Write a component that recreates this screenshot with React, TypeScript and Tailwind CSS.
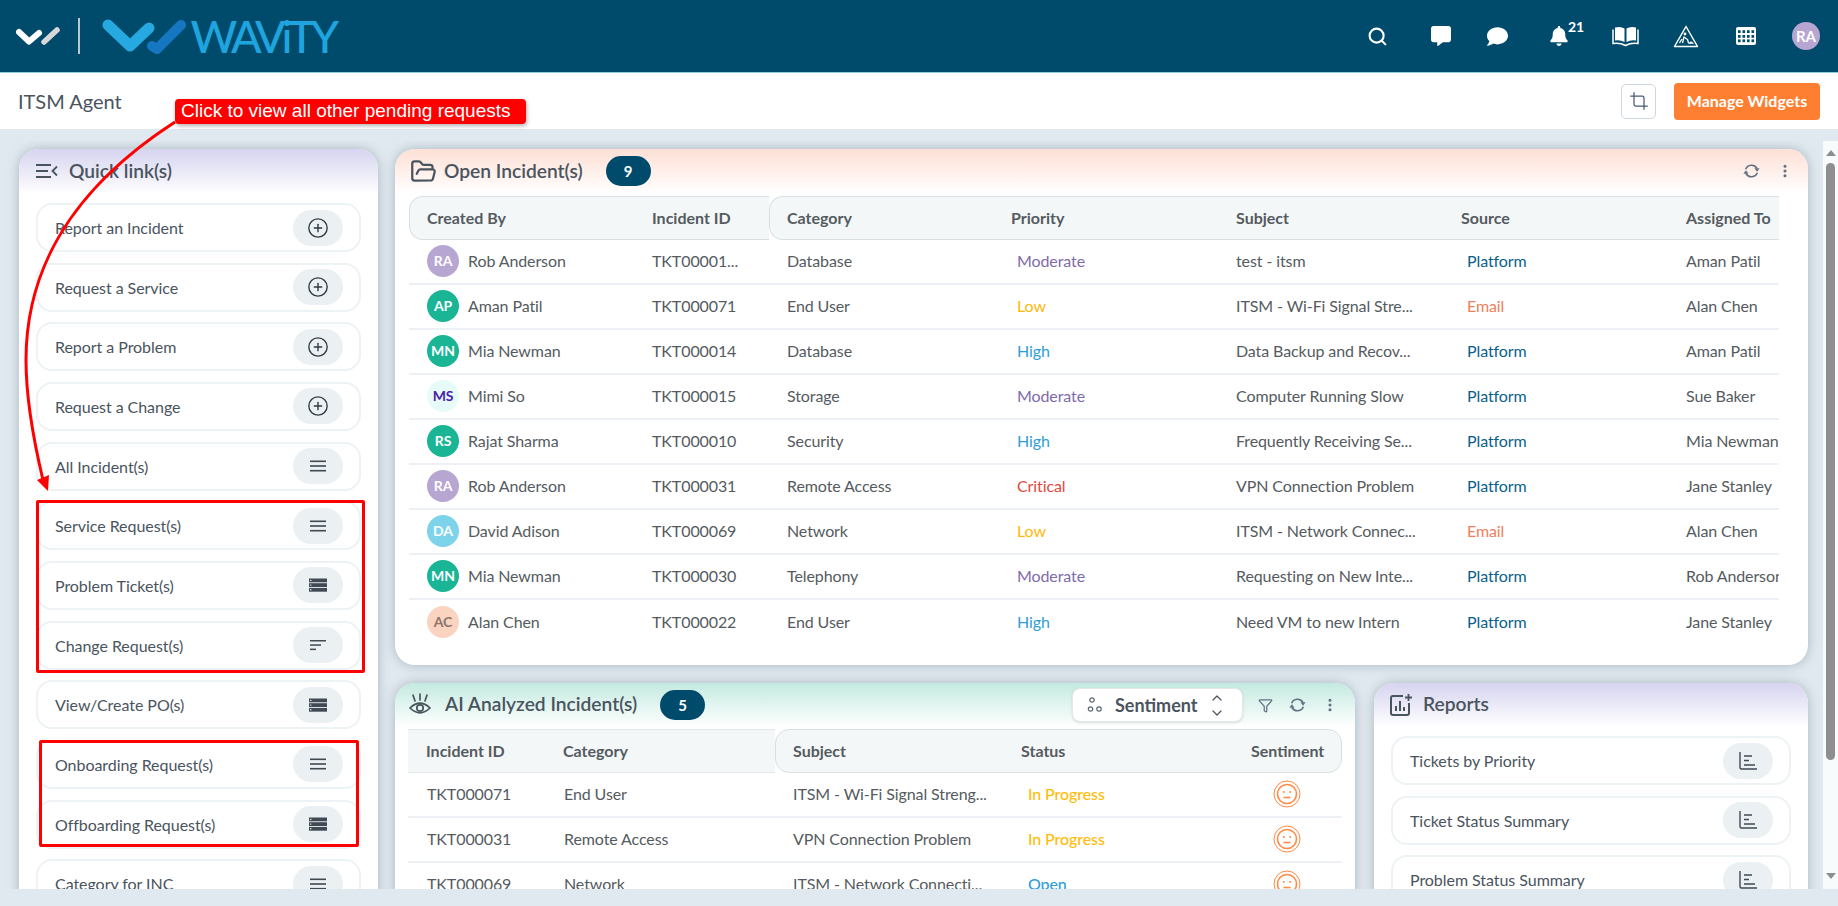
import { Search, CirclePlus, Crop, FolderOpen, EllipsisVertical, Funnel, ChevronUp, ChevronDown } from "lucide-react";
import { FaCommentAlt, FaComment, FaBell } from "react-icons/fa";

const linkItems = [
  { label: "Report an Incident", icon: "plus" },
  { label: "Request a Service", icon: "plus" },
  { label: "Report a Problem", icon: "plus" },
  { label: "Request a Change", icon: "plus" },
  { label: "All Incident(s)", icon: "menu" },
  { label: "Service Request(s)", icon: "menu" },
  { label: "Problem Ticket(s)", icon: "server" },
  { label: "Change Request(s)", icon: "sort" },
  { label: "View/Create PO(s)", icon: "server" },
  { label: "Onboarding Request(s)", icon: "menu" },
  { label: "Offboarding Request(s)", icon: "server" },
  { label: "Category for INC", icon: "menu" },
];

const avatarColors: Record<string, string> = {
  RA: "bg-[#b7a6d2] text-white",
  AP: "bg-[#1ab595] text-white",
  MN: "bg-[#1ab595] text-white",
  MS: "bg-[#e6fbfa] text-[#4a22a8]",
  RS: "bg-[#1ab595] text-white",
  DA: "bg-[#7dd3ea] text-white",
  AC: "bg-[#fad4c0] text-[#8a7468]",
};

const priorityColors: Record<string, string> = {
  Moderate: "text-[#7e6bab]",
  Low: "text-[#ffb80a]",
  High: "text-[#2f9ed8]",
  Critical: "text-[#e0483e]",
};

const incidents = [
  ["RA", "Rob Anderson", "TKT00001...", "Database", "Moderate", "test - itsm", "Platform", "Aman Patil"],
  ["AP", "Aman Patil", "TKT000071", "End User", "Low", "ITSM - Wi-Fi Signal Stre...", "Email", "Alan Chen"],
  ["MN", "Mia Newman", "TKT000014", "Database", "High", "Data Backup and Recov...", "Platform", "Aman Patil"],
  ["MS", "Mimi So", "TKT000015", "Storage", "Moderate", "Computer Running Slow", "Platform", "Sue Baker"],
  ["RS", "Rajat Sharma", "TKT000010", "Security", "High", "Frequently Receiving Se...", "Platform", "Mia Newman"],
  ["RA", "Rob Anderson", "TKT000031", "Remote Access", "Critical", "VPN Connection Problem", "Platform", "Jane Stanley"],
  ["DA", "David Adison", "TKT000069", "Network", "Low", "ITSM - Network Connec...", "Email", "Alan Chen"],
  ["MN", "Mia Newman", "TKT000030", "Telephony", "Moderate", "Requesting on New Inte...", "Platform", "Rob Anderson"],
  ["AC", "Alan Chen", "TKT000022", "End User", "High", "Need VM to new Intern", "Platform", "Jane Stanley"],
];

const analyzed = [
  ["TKT000071", "End User", "ITSM - Wi-Fi Signal Streng...", "In Progress"],
  ["TKT000031", "Remote Access", "VPN Connection Problem", "In Progress"],
  ["TKT000069", "Network", "ITSM - Network Connecti...", "Open"],
];

const reports = ["Tickets by Priority", "Ticket Status Summary", "Problem Status Summary"];

const MenuIcon = () => (
  <svg width="18" height="14" viewBox="0 0 18 14" fill="#3f4a54">
    <rect x="1" y="1.500" width="16" height="1.600" />
    <rect x="1" y="6.200" width="16" height="1.600" />
    <rect x="1" y="10.900" width="16" height="1.600" />
  </svg>
);

const SortIcon = () => (
  <svg width="18" height="14" viewBox="0 0 18 14" fill="#3f4a54">
    <rect x="1" y="2" width="16" height="1.500" />
    <rect x="1" y="6.300" width="11" height="1.500" />
    <rect x="1" y="10.600" width="6" height="1.500" />
  </svg>
);

const ServerIcon = () => (
  <svg width="18" height="14" viewBox="0 0 18 14" fill="#3f4a54">
    <rect y="0.500" width="18" height="3.800" />
    <rect y="5.200" width="18" height="3.800" />
    <rect y="9.900" width="18" height="3.800" />
    <circle cx="1.800" cy="2.400" r="0.700" fill="#fff" />
    <circle cx="1.800" cy="7.100" r="0.700" fill="#fff" />
    <circle cx="1.800" cy="11.800" r="0.700" fill="#fff" />
  </svg>
);

const ChartIcon = () => (
  <svg width="20" height="20" viewBox="0 0 20 20" fill="none" stroke="#3f4a54" strokeWidth="1.400">
    <path d="M2 1v15.500q0 1.500 1.500 1.500H19" />
    <path d="M6 5h8M6 9.500h5M6 14h11" />
  </svg>
);

const SyncIcon = () => (
  <svg width="17" height="18" viewBox="0 0 18 20" fill="none" stroke="#5f7083" strokeWidth="1.900">
    <path d="M2.500 8A7 7 0 0 1 15 7" />
    <path d="M12.300 7H18l-2.800 3.800z" fill="#5f7083" stroke="none" />
    <path d="M15.500 12A7 7 0 0 1 3 13" />
    <path d="M0 13h5.700l-2.900-3.800z" fill="#5f7083" stroke="none" />
  </svg>
);

const LinkIcon = ({ name }: { name: string }) => {
  if (name === "plus") return <CirclePlus size={22} strokeWidth={1.5} color="#2f3a44" />;
  if (name === "server") return <ServerIcon />;
  if (name === "sort") return <SortIcon />;
  return <MenuIcon />;
};

const Row = ({ label, children }: { label: string; children: React.ReactNode }) => (
  <div className="flex h-[49px] shrink-0 items-center justify-between rounded-[16px] border-2 border-[#edf2f5] bg-white pl-[17px] pr-[16px]">
    <span className="pt-[1px] text-[16px] tracking-[-0.05px] text-[#4a545e]">{label}</span>
    <span className="flex h-[36px] w-[50px] items-center justify-center rounded-full bg-[#ebf0f3]">{children}</span>
  </div>
);

const Avatar = ({ code }: { code: string }) => (
  <span className={`flex h-[32px] w-[32px] shrink-0 items-center justify-center rounded-full text-[14px] font-bold ${avatarColors[code]}`}>
    {code}
  </span>
);

const Smiley = () => (
  <svg width="28" height="28" viewBox="0 0 28 28" fill="none" stroke="#ff8a45">
    <circle cx="14" cy="14" r="13" strokeWidth="1" />
    <circle cx="14" cy="14" r="9.500" strokeWidth="1.600" />
    <circle cx="10.800" cy="12" r="1" fill="#ff8a45" stroke="none" />
    <circle cx="17.200" cy="12" r="1" fill="#ff8a45" stroke="none" />
    <path d="M10.500 17.500h7" strokeWidth="1.600" />
  </svg>
);

const Badge = ({ value }: { value: number }) => (
  <span className="flex h-[30px] w-[45px] items-center justify-center rounded-full bg-[#004b6b] text-[15px] font-bold text-white">{value}</span>
);

const HeaderIcon = ({ className, children }: { className: string; children: React.ReactNode }) => (
  <div className={`relative flex h-[32px] w-[32px] items-center justify-center ${className}`}>{children}</div>
);

export default function App() {
  return (
    <div className="relative flex h-[906px] w-[1838px] flex-col overflow-hidden bg-[#e1e9f0] font-[Lato,sans-serif]">
      {/* Top bar */}
      <header className="flex h-[73px] shrink-0 items-center justify-between border-b border-[#8fd0e6] bg-[#004b6b]">
        <div className="flex items-center pl-[16px]">
          <svg width="46" height="20" viewBox="0 0 46 20" fill="none" strokeLinejoin="round" strokeLinecap="round">
            <path d="M3 6l10 9.500 10-8.500" stroke="#fff" strokeWidth="6" />
            <path d="M28 16l13-12" stroke="#d8d8d8" strokeWidth="5.500" />
          </svg>
          <div className="ml-[16px] h-[36px] w-[1.5px] bg-[#b8c8d0]" />
          <svg className="ml-[22px]" width="86" height="36" viewBox="0 0 86 36" fill="none" strokeLinejoin="round" strokeLinecap="round">
            <path d="M6 7l22 21 19-18" stroke="#25a9e0" strokeWidth="11" />
            <path d="M50 28l5 3 24-24" stroke="#1576c2" strokeWidth="10" />
          </svg>
          <span className="ml-[3px] text-[45px] font-medium leading-none tracking-[-4.2px] text-[#1ea4df]">WAViTY</span>
        </div>
        <div className="flex items-center pr-[16px] text-white">
          <HeaderIcon className=""><Search size={21} strokeWidth={2.4} /></HeaderIcon>
          <HeaderIcon className="ml-[32px]"><FaCommentAlt size={20} /></HeaderIcon>
          <HeaderIcon className="ml-[24px]"><FaComment size={21} /></HeaderIcon>
          <HeaderIcon className="ml-[30px]">
            <FaBell size={20} />
            <span className="absolute left-[25px] top-[-4px] text-[14px] font-bold">21</span>
          </HeaderIcon>
          <HeaderIcon className="ml-[34px]">
            <svg width="27" height="21" viewBox="0 0 27 21" fill="#fff">
              <path d="M3 1.500q5.500-1.500 9.500 1V16q-4.500-2.500-9.500-1.500z" />
              <path d="M24 1.500q-5.500-1.500-9.500 1V16q4.500-2.500 9.500-1.500z" />
              <path d="M1 3.500V17.500q7-1 12.500 2 5.500-3 12.500-2V3.500" fill="none" stroke="#fff" strokeWidth="1.500" />
            </svg>
          </HeaderIcon>
          <HeaderIcon className="ml-[29px]">
            <svg width="26" height="23" viewBox="0 0 26 23" fill="none" stroke="#fff" strokeWidth="1.500" strokeLinejoin="round">
              <path d="M13 1.500L24.500 21.500H1.500z" />
              <circle cx="12" cy="9" r="1.400" fill="#fff" stroke="none" />
              <path d="M9.500 18l1.500-6 3.500 2.500 1 3.500M6.500 18l2.500-4" strokeWidth="1.300" />
              <path d="M15.500 18.500q2.500-3.500 5 0z" fill="#fff" strokeWidth="0.600" />
            </svg>
          </HeaderIcon>
          <HeaderIcon className="ml-[28px]">
            <svg width="20" height="18" viewBox="0 0 20 18">
              <rect width="20" height="18" rx="2" fill="#fff" />
              {[4.6, 9.4, 13.8].map((y) =>
                [2, 6.5, 11, 15.5].map((x) => <rect key={`${x}-${y}`} x={x} y={y - 1.4} width="2.600" height="2.800" fill="#004b6b" />)
              )}
            </svg>
          </HeaderIcon>
          <HeaderIcon className="ml-[28px]">
            <span className="flex h-[28px] w-[28px] items-center justify-center rounded-full bg-[#b7a6d2] text-[15px] font-bold text-white">RA</span>
          </HeaderIcon>
        </div>
      </header>

      {/* Page title row */}
      <div className="flex h-[56px] shrink-0 items-center justify-between bg-white pl-[18px] pr-[18px]">
        <span className="text-[20px] text-[#4a545e]">ITSM Agent</span>
        <div className="flex items-center gap-[18px]">
          <button className="flex h-[35px] w-[35px] items-center justify-center rounded-[5px] border border-[#ced6de] bg-white">
            <Crop size={20} strokeWidth={1.5} color="#4a5a70" />
          </button>
          <button className="h-[37px] w-[146px] rounded-[4px] bg-[#ff7f32] text-[16px] font-bold text-white">Manage Widgets</button>
        </div>
      </div>

      {/* Dashboard */}
      <div className="mb-[17px] mt-[12px] flex min-h-0 flex-1 overflow-hidden">
        <div className="flex min-w-0 flex-1 gap-[17px] pl-[19px] pt-[8px]">
          {/* Quick links */}
          <section className="w-[359px] shrink-0 self-start overflow-hidden rounded-t-[20px] bg-white shadow-[0_0_12px_rgba(80,105,115,0.4)]">
            <div className="flex h-[45px] items-center bg-gradient-to-b from-[#d6d4ef] to-white pb-[1px] pl-[17px]">
              <svg width="22" height="16" viewBox="0 0 22 16" fill="#4a545e">
                <rect x="0" y="1" width="15" height="2" />
                <rect x="0" y="7" width="12" height="2" />
                <rect x="0" y="13" width="15" height="2" />
                <path d="M21 3.500L16.500 8l4.500 4.500" fill="none" stroke="#4a545e" strokeWidth="1.800" />
              </svg>
              <h2 className="ml-[11px] text-[19.2px] font-semibold text-[#4a545e]">Quick link(s)</h2>
            </div>
            <div className="flex flex-col gap-[10.67px] px-[17px] pb-[20px] pt-[9px]">
              {linkItems.map((item) => (
                <Row key={item.label} label={item.label}>
                  <LinkIcon name={item.icon} />
                </Row>
              ))}
            </div>
          </section>

          <div className="flex w-[1413px] shrink-0 flex-col gap-[18px]">
            {/* Open incidents */}
            <section className="h-[516px] shrink-0 overflow-hidden rounded-[20px] bg-white shadow-[0_0_12px_rgba(80,105,115,0.4)]">
              <div className="flex h-[45px] items-center bg-gradient-to-b from-[#fde0d5] to-white pb-[1px] pl-[15px] pr-[15px]">
                <FolderOpen size={27} strokeWidth={2} color="#4a545e" />
                <h2 className="ml-[7px] text-[19.2px] font-semibold text-[#4a545e]">Open Incident(s)</h2>
                <span className="ml-[23px]"><Badge value={9} /></span>
                <div className="ml-auto flex items-center gap-[17px]">
                  <SyncIcon />
                  <EllipsisVertical size={16} strokeWidth={2.6} color="#5f7083" />
                </div>
              </div>
              <div className="ml-[14px] mr-[29px] mt-[2px] overflow-hidden">
                <div className="flex h-[44px] text-[16px] font-bold text-[#555b60]">
                  <div className="flex w-[360px] items-center rounded-l-[14px] border border-r-0 border-[#d9dfe3] bg-[#f4f7f8]">
                    <span className="w-[224px] pl-[17px]">Created By</span>
                    <span className="pl-[18px]">Incident ID</span>
                  </div>
                  <div className="flex flex-1 items-center rounded-l-[14px] border border-r-0 border-[#d9dfe3] bg-[#f4f7f8]">
                    <span className="w-[224px] pl-[17px]">Category</span>
                    <span className="w-[224px] pl-[17px]">Priority</span>
                    <span className="w-[225px] pl-[18px]">Subject</span>
                    <span className="w-[225px] pl-[18px]">Source</span>
                    <span className="whitespace-nowrap pl-[18px]">Assigned To</span>
                  </div>
                </div>
                {incidents.map((r, i) => (
                  <div key={r[2]} className={`flex h-[45px] items-center whitespace-nowrap pb-[2px] text-[16px] tracking-[-0.1px] text-[#555b60] ${i < 8 ? "border-b-2 border-[#edf1f5]" : ""}`}>
                    <div className="flex w-[224px] shrink-0 items-center gap-[9px] pl-[18px]">
                      <Avatar code={r[0]} />
                      <span>{r[1]}</span>
                    </div>
                    <span className="w-[136px] shrink-0 pl-[19px]">{r[2]}</span>
                    <span className="w-[224px] shrink-0 pl-[18px]">{r[3]}</span>
                    <span className={`w-[224px] shrink-0 pl-[24px] ${priorityColors[r[4]]}`}>{r[4]}</span>
                    <span className="w-[225px] shrink-0 pl-[19px]">{r[5]}</span>
                    <span className={`w-[225px] shrink-0 pl-[25px] ${r[6] === "Email" ? "text-[#f0805c]" : "text-[#0b5f8a]"}`}>{r[6]}</span>
                    <span className="shrink-0 pl-[19px]">{r[7]}</span>
                  </div>
                ))}
              </div>
            </section>

            <div className="flex items-start gap-[19px]">
              {/* AI analyzed */}
              <section className="w-[960px] shrink-0 overflow-hidden rounded-t-[20px] bg-white pb-[20px] shadow-[0_0_12px_rgba(80,105,115,0.4)]">
                <div className="flex h-[44px] items-center bg-gradient-to-b from-[#c3eae0] to-white pl-[14px] pr-[17px]">
                  <svg width="22" height="26" viewBox="0 0 22 26" fill="none" stroke="#4a545e" strokeWidth="1.700" strokeLinecap="round">
                    <path d="M1 16q10-9.500 20 0q-10 9.500-20 0z" />
                    <circle cx="11" cy="16" r="3.200" />
                    <path d="M11 8V2M6 9L4 3M16 9l2-6" />
                  </svg>
                  <h2 className="mb-[2px] ml-[14px] text-[19.2px] font-semibold text-[#4a545e]">AI Analyzed Incident(s)</h2>
                  <span className="ml-[23px]"><Badge value={5} /></span>
                  <div className="ml-auto flex h-[34px] w-[171px] items-center rounded-[8px] border border-[#e3e8eb] bg-white pl-[14px] shadow-sm">
                    <svg width="16" height="18" viewBox="0 0 16 18" fill="none" stroke="#5b6673" strokeWidth="1.200">
                      <circle cx="5" cy="4" r="2.200" />
                      <circle cx="3.500" cy="13" r="2.200" />
                      <circle cx="12" cy="13" r="2.200" />
                    </svg>
                    <span className="ml-[12px] text-[18px] font-bold text-[#4a545e]">Sentiment</span>
                    <span className="ml-[12px] flex flex-col text-[#4a545e]">
                      <ChevronUp size={16} strokeWidth={1.8} className="-mb-[1px]" />
                      <ChevronDown size={16} strokeWidth={1.8} />
                    </span>
                  </div>
                  <Funnel size={15} strokeWidth={2} color="#5f7083" className="ml-[15px]" />
                  <span className="ml-[16px]"><SyncIcon /></span>
                  <EllipsisVertical size={16} strokeWidth={2.6} color="#5f7083" className="ml-[16px]" />
                </div>
                <div className="mx-[13px] mt-[2px]">
                  <div className="flex h-[44px] text-[16px] font-bold text-[#555b60]">
                    <div className="flex w-[367px] items-center border-y border-[#e3e8eb] bg-[#f4f7f8]">
                      <span className="w-[137px] pl-[18px]">Incident ID</span>
                      <span className="pl-[18px]">Category</span>
                    </div>
                    <div className="flex flex-1 items-center rounded-[14px] border border-[#d9dfe3] bg-[#f4f7f8]">
                      <span className="w-[227px] pl-[17px]">Subject</span>
                      <span className="w-[231px] pl-[18px]">Status</span>
                      <span className="pl-[17px]">Sentiment</span>
                    </div>
                  </div>
                  {analyzed.map((r) => (
                    <div key={r[0]} className="flex h-[45px] items-center whitespace-nowrap border-b-2 border-[#edf1f5] pb-[1px] text-[16px] tracking-[-0.1px] text-[#555b60]">
                      <span className="w-[137px] shrink-0 pl-[19px]">{r[0]}</span>
                      <span className="w-[230px] shrink-0 pl-[19px]">{r[1]}</span>
                      <span className="w-[227px] shrink-0 pl-[18px]">{r[2]}</span>
                      <span className={`w-[231px] shrink-0 pl-[26px] font-medium ${r[3] === "Open" ? "text-[#2f9ed8]" : "text-[#ffbd0a]"}`}>{r[3]}</span>
                      <span className="flex w-[108px] justify-center"><Smiley /></span>
                    </div>
                  ))}
                </div>
              </section>

              {/* Reports */}
              <section className="w-[434px] shrink-0 overflow-hidden rounded-t-[20px] bg-white pb-[20px] shadow-[0_0_12px_rgba(80,105,115,0.4)]">
                <div className="flex h-[44px] items-center bg-gradient-to-b from-[#d6d4ef] to-white pl-[16px]">
                  <svg width="22" height="24" viewBox="0 0 22 24" fill="none" stroke="#4a545e" strokeWidth="2">
                    <path d="M13 3H3q-2 0-2 2v15q0 2 2 2h14q2 0 2-2V10" />
                    <path d="M6 18v-5M10 18V8M14 18v-4" />
                    <path d="M18.500 1v7M15 4.500h7" strokeWidth="1.800" />
                  </svg>
                  <h2 className="mb-[2px] ml-[11px] text-[19.2px] font-semibold text-[#4a545e]">Reports</h2>
                </div>
                <div className="flex flex-col gap-[10.67px] pl-[17px] pr-[17px] pt-[9px]">
                  {reports.map((label) => (
                    <Row key={label} label={label}>
                      <ChartIcon />
                    </Row>
                  ))}
                </div>
              </section>
            </div>
          </div>
        </div>

        {/* Scrollbar */}
        <div className="flex w-[15px] shrink-0 flex-col items-center bg-[#f8fbfc]">
          <span className="mt-[9px] h-0 w-0 border-x-[5px] border-b-[6px] border-x-transparent border-b-[#8e8e8e]" />
          <span className="mt-[7px] h-[597px] w-[9px] rounded-full bg-[#8e8e8e]" />
          <span className="mt-[113px] h-0 w-0 border-x-[5px] border-t-[6px] border-x-transparent border-t-[#8e8e8e]" />
        </div>
      </div>

      {/* Annotations drawn over the page */}
      <svg className="pointer-events-none absolute inset-0" width="1838" height="906" fill="none">
        <path d="M175 122C70 190 26 270 26 360C26 400 33 438 43 480" stroke="#f00" strokeWidth="3" />
        <path d="M37 480L49 475L48 491z" fill="#f00" />
      </svg>
      <div className="absolute left-[175px] top-[99px] flex h-[25px] w-[351px] items-center rounded-[4px] bg-[#f00] pl-[6px] font-['Liberation_Sans',sans-serif] text-[19px] text-white shadow-[1px_2px_4px_rgba(0,0,0,0.3)]">
        Click to view all other pending requests
      </div>
      <div className="absolute left-[36px] top-[500px] h-[173px] w-[329px] rounded-[2px] border-[3px] border-[#f00]" />
      <div className="absolute left-[39px] top-[740px] h-[107px] w-[320px] rounded-[2px] border-[3px] border-[#f00]" />
    </div>
  );
}
